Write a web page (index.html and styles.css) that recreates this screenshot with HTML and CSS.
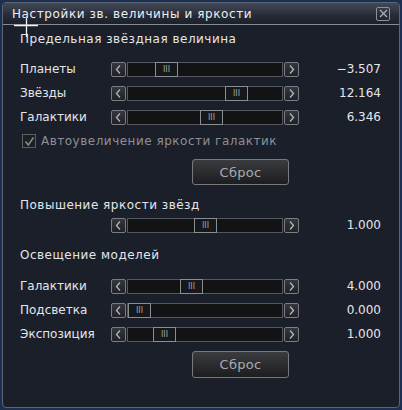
FILE: index.html
```html
<!DOCTYPE html>
<html lang="ru">
<head>
  <meta charset="UTF-8" />
  <title>Настройки зв. величины и яркости</title>
  <link rel="stylesheet" href="styles.css">
</head>
<body>
  <div class="window">
    <div class="titlebar">
      <span class="title">Настройки зв. величины и яркости</span>
      <span class="close">
        <svg width="9" height="9" viewBox="0 0 9 9"><path d="M1 1L8 8M8 1L1 8" stroke="#a8abb0" stroke-width="1.4"/></svg>
      </span>
    </div>

    <div class="content">
      <div class="heading first">Предельная звёздная величина</div>

      <div class="row rows-top">
        <span class="label">Планеты</span>
        <div class="slider">
          <span class="arrow"><svg width="13" height="13" viewBox="0 0 13 13"><path d="M8 2.5L4.5 6.5L8 10.5" /></svg></span>
          <div class="track"><span class="handle" style="margin-left:27px">III</span></div>
          <span class="arrow"><svg width="13" height="13" viewBox="0 0 13 13"><path d="M5 2.5L8.5 6.5L5 10.5" /></svg></span>
        </div>
        <span class="value">&minus;3.507</span>
      </div>
      <div class="row">
        <span class="label">Звёзды</span>
        <div class="slider">
          <span class="arrow"><svg width="13" height="13" viewBox="0 0 13 13"><path d="M8 2.5L4.5 6.5L8 10.5" /></svg></span>
          <div class="track"><span class="handle" style="margin-left:97px">III</span></div>
          <span class="arrow"><svg width="13" height="13" viewBox="0 0 13 13"><path d="M5 2.5L8.5 6.5L5 10.5" /></svg></span>
        </div>
        <span class="value">12.164</span>
      </div>
      <div class="row">
        <span class="label">Галактики</span>
        <div class="slider">
          <span class="arrow"><svg width="13" height="13" viewBox="0 0 13 13"><path d="M8 2.5L4.5 6.5L8 10.5" /></svg></span>
          <div class="track"><span class="handle" style="margin-left:72px">III</span></div>
          <span class="arrow"><svg width="13" height="13" viewBox="0 0 13 13"><path d="M5 2.5L8.5 6.5L5 10.5" /></svg></span>
        </div>
        <span class="value">6.346</span>
      </div>

      <div class="check-row">
        <span class="checkbox">
          <svg width="11" height="11" viewBox="0 0 11 11"><path d="M1.5 5.5L4.3 9L9.5 1.5" fill="none" stroke="#8c8c8c" stroke-width="1.5"/></svg>
        </span>
        <span class="check-label">Автоувеличение яркости галактик</span>
      </div>

      <button class="reset first-reset">Сброс</button>

      <div class="heading second">Повышение яркости звёзд</div>
      <div class="row">
        <span class="label"></span>
        <div class="slider">
          <span class="arrow"><svg width="13" height="13" viewBox="0 0 13 13"><path d="M8 2.5L4.5 6.5L8 10.5" /></svg></span>
          <div class="track"><span class="handle" style="margin-left:66px">III</span></div>
          <span class="arrow"><svg width="13" height="13" viewBox="0 0 13 13"><path d="M5 2.5L8.5 6.5L5 10.5" /></svg></span>
        </div>
        <span class="value">1.000</span>
      </div>

      <div class="heading third">Освещение моделей</div>
      <div class="row rows-models">
        <span class="label">Галактики</span>
        <div class="slider">
          <span class="arrow"><svg width="13" height="13" viewBox="0 0 13 13"><path d="M8 2.5L4.5 6.5L8 10.5" /></svg></span>
          <div class="track"><span class="handle" style="margin-left:52px">III</span></div>
          <span class="arrow"><svg width="13" height="13" viewBox="0 0 13 13"><path d="M5 2.5L8.5 6.5L5 10.5" /></svg></span>
        </div>
        <span class="value">4.000</span>
      </div>
      <div class="row">
        <span class="label">Подсветка</span>
        <div class="slider">
          <span class="arrow"><svg width="13" height="13" viewBox="0 0 13 13"><path d="M8 2.5L4.5 6.5L8 10.5" /></svg></span>
          <div class="track"><span class="handle" style="margin-left:0px">III</span></div>
          <span class="arrow"><svg width="13" height="13" viewBox="0 0 13 13"><path d="M5 2.5L8.5 6.5L5 10.5" /></svg></span>
        </div>
        <span class="value">0.000</span>
      </div>
      <div class="row">
        <span class="label">Экспозиция</span>
        <div class="slider">
          <span class="arrow"><svg width="13" height="13" viewBox="0 0 13 13"><path d="M8 2.5L4.5 6.5L8 10.5" /></svg></span>
          <div class="track"><span class="handle" style="margin-left:25px">III</span></div>
          <span class="arrow"><svg width="13" height="13" viewBox="0 0 13 13"><path d="M5 2.5L8.5 6.5L5 10.5" /></svg></span>
        </div>
        <span class="value">1.000</span>
      </div>

      <button class="reset second-reset">Сброс</button>
    </div>

    <!-- mouse cursor caught in the shot -->
    <svg class="cursor" width="25" height="20" viewBox="0 0 25 20">
      <path d="M0 7.5H24M12.5 0V19" stroke="#f2f2f2" stroke-width="1.3"/>
    </svg>
  </div>
</body>
</html>
```

FILE: styles.css
```css
body {
  margin: 0;
  background-color: #1b3050;
  font-family: "DejaVu Sans", sans-serif;
  font-size: 12px;
  color: #e4e6ea;
}
.window {
  position: relative;
  margin: 2px;
  height: 404px;
  border: 1px solid #5d6575;
  border-radius: 4px;
  background-color: #1b1f2a;
  overflow: hidden;
}
.titlebar {
  display: flex;
  align-items: center;
  justify-content: space-between;
  height: 21px;
  padding: 0 9px 0 9px;
  border-bottom: 1px solid #868b94;
  background: linear-gradient(#434a58, #262b36 60%, #1c2029);
}
.title {
  letter-spacing: 0.6px;
  color: #eceef2;
}
.close {
  display: flex;
  align-items: center;
  justify-content: center;
  width: 12px;
  height: 12px;
  border: 1px solid #8d9199;
  border-radius: 2px;
}
.content {
  padding: 0 18px 0 17px;
}
.heading {
  height: 16px;
  line-height: 16px;
  letter-spacing: 0.5px;
}
.heading.first {
  margin-top: 6px;
}
.heading.second {
  margin-top: 12px;
}
.heading.third {
  margin-top: 10px;
}
.row {
  display: flex;
  align-items: center;
  height: 24px;
}
.rows-top {
  margin-top: 10px;
}
.rows-models {
  margin-top: 11px;
}
.label {
  width: 91px;
}
.slider {
  display: flex;
  align-items: center;
  gap: 1px;
  width: 188px;
  height: 15px;
}
.arrow {
  display: flex;
  width: 13px;
  height: 13px;
  border: 1px solid #7a7d83;
  border-radius: 2px;
  background: linear-gradient(#34373d, #1f2125);
}
.arrow path {
  fill: none;
  stroke: #b4b6ba;
  stroke-width: 1.3;
}
.track {
  display: flex;
  flex: 1;
  height: 13px;
  border: 1px solid #54575d;
  background-color: #121315;
}
.handle {
  display: flex;
  align-items: center;
  justify-content: center;
  width: 21px;
  height: 13px;
  margin-top: -1px;
  border: 1px solid #8a8d92;
  background-color: #17181b;
  color: #a0a2a6;
  font-size: 8px;
}
.value {
  flex: 1;
  text-align: right;
}
.check-row {
  display: flex;
  align-items: center;
  height: 24px;
  padding-left: 2px;
}
.checkbox {
  display: flex;
  align-items: center;
  justify-content: center;
  width: 12px;
  height: 12px;
  border: 1px solid #5c5e62;
  background-color: #1d1f24;
  margin-right: 5px;
}
.check-label {
  color: #8e9096;
  letter-spacing: 0.5px;
}
.reset {
  display: block;
  width: 97px;
  height: 26px;
  margin-left: 172px;
  border: 1px solid #77797e;
  border-radius: 3px;
  background: linear-gradient(#3b3c3f, #1c1d1f);
  color: #a9abaf;
  font-family: "DejaVu Sans", sans-serif;
  font-size: 13px;
  letter-spacing: 0.3px;
}
.first-reset {
  margin-top: 6px;
}
.second-reset {
  margin-top: 5px;
  height: 27px;
}
.cursor {
  position: absolute;
  left: 11px;
  top: 15px;
}
```
